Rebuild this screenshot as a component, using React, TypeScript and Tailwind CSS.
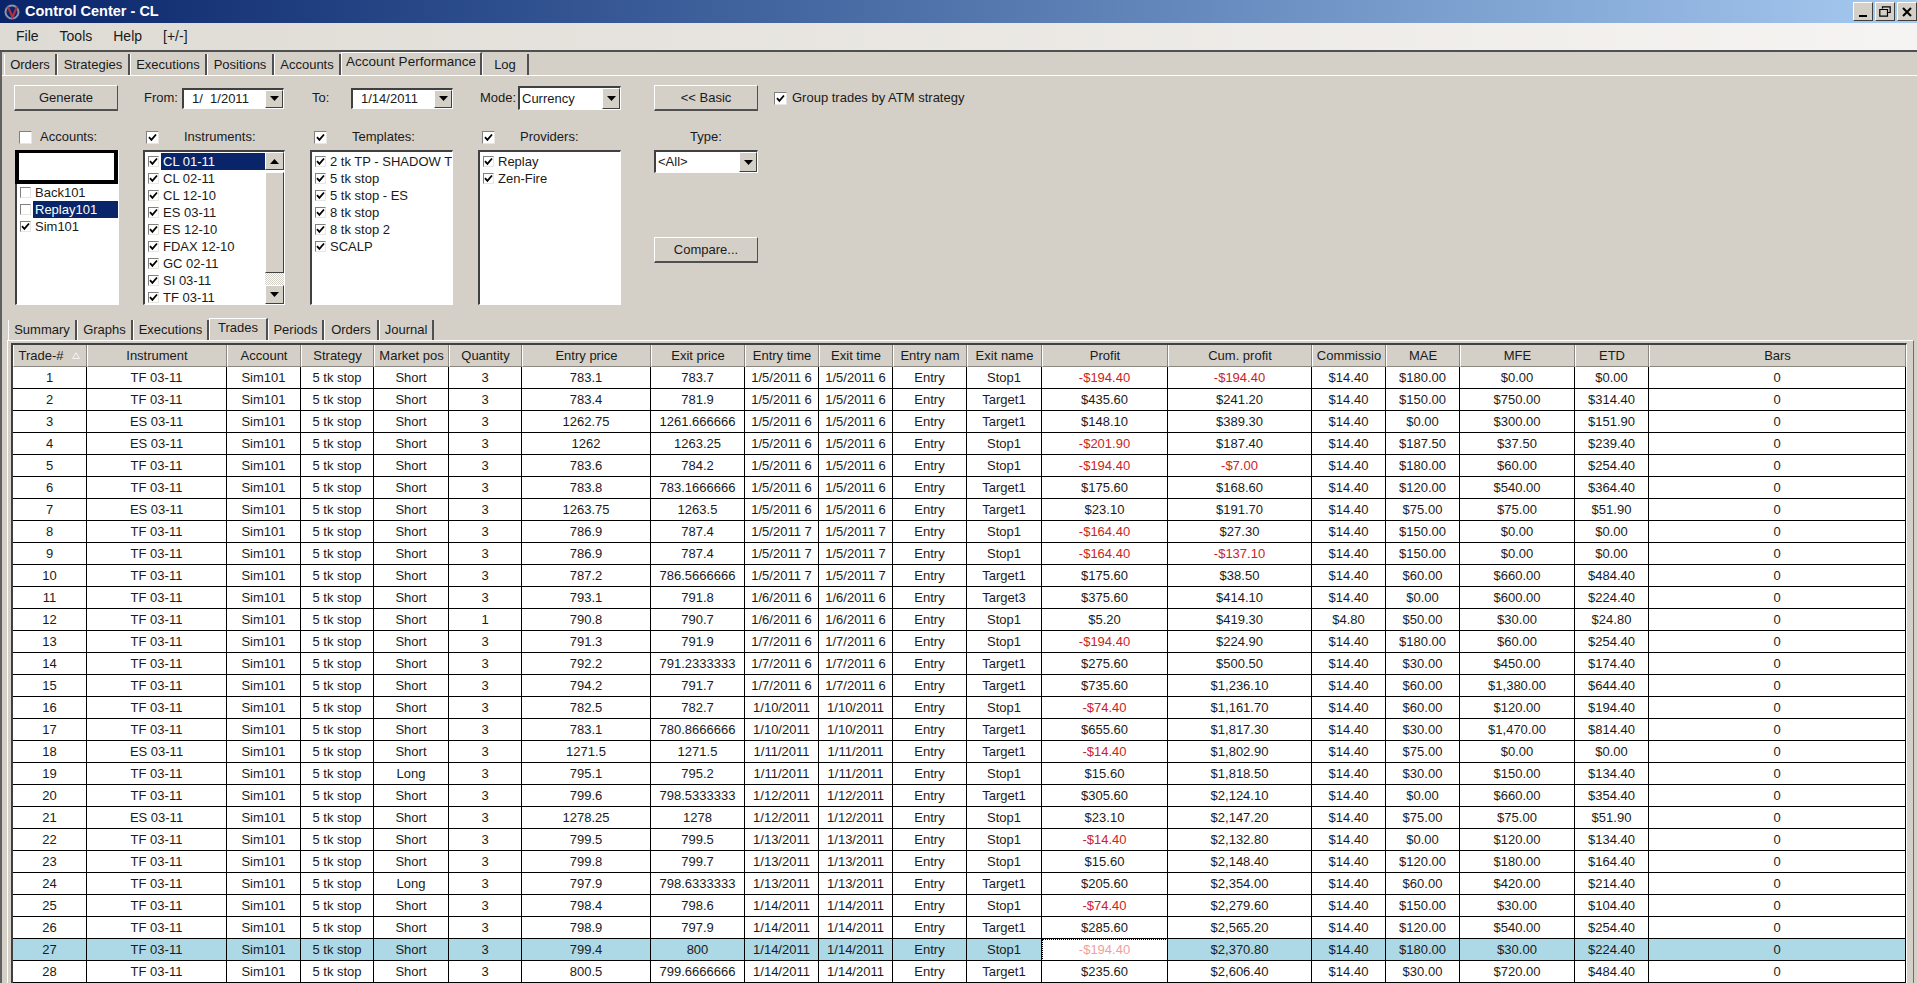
import React from 'react';

type Trade = [number, string, string, string, string, string, string, string, string, string, string, string, string, string, string];

const columns = [
  { label: 'Trade-#', width: 'w-[74px]' },
  { label: 'Instrument', width: 'w-[140px]' },
  { label: 'Account', width: 'w-[74px]' },
  { label: 'Strategy', width: 'w-[73px]' },
  { label: 'Market pos', width: 'w-[75px]' },
  { label: 'Quantity', width: 'w-[73px]' },
  { label: 'Entry price', width: 'w-[129px]' },
  { label: 'Exit price', width: 'w-[94px]' },
  { label: 'Entry time', width: 'w-[74px]' },
  { label: 'Exit time', width: 'w-[74px]' },
  { label: 'Entry nam', width: 'w-[74px]' },
  { label: 'Exit name', width: 'w-[75px]' },
  { label: 'Profit', width: 'w-[126px]' },
  { label: 'Cum. profit', width: 'w-[144px]' },
  { label: 'Commissio', width: 'w-[74px]' },
  { label: 'MAE', width: 'w-[74px]' },
  { label: 'MFE', width: 'w-[115px]' },
  { label: 'ETD', width: 'w-[74px]' },
  { label: 'Bars', width: 'w-[257px]' },
];

// id, instrument, position, qty, entry, exit, time, exit name, profit, cum, commission, mae, mfe, etd
const trades: Trade[] = [
  [1, 'TF 03-11', 'Short', '3', '783.1', '783.7', '1/5/2011 6', 'Stop1', '-$194.40', '-$194.40', '$14.40', '$180.00', '$0.00', '$0.00', ''],
  [2, 'TF 03-11', 'Short', '3', '783.4', '781.9', '1/5/2011 6', 'Target1', '$435.60', '$241.20', '$14.40', '$150.00', '$750.00', '$314.40', ''],
  [3, 'ES 03-11', 'Short', '3', '1262.75', '1261.666666', '1/5/2011 6', 'Target1', '$148.10', '$389.30', '$14.40', '$0.00', '$300.00', '$151.90', ''],
  [4, 'ES 03-11', 'Short', '3', '1262', '1263.25', '1/5/2011 6', 'Stop1', '-$201.90', '$187.40', '$14.40', '$187.50', '$37.50', '$239.40', ''],
  [5, 'TF 03-11', 'Short', '3', '783.6', '784.2', '1/5/2011 6', 'Stop1', '-$194.40', '-$7.00', '$14.40', '$180.00', '$60.00', '$254.40', ''],
  [6, 'TF 03-11', 'Short', '3', '783.8', '783.1666666', '1/5/2011 6', 'Target1', '$175.60', '$168.60', '$14.40', '$120.00', '$540.00', '$364.40', ''],
  [7, 'ES 03-11', 'Short', '3', '1263.75', '1263.5', '1/5/2011 6', 'Target1', '$23.10', '$191.70', '$14.40', '$75.00', '$75.00', '$51.90', ''],
  [8, 'TF 03-11', 'Short', '3', '786.9', '787.4', '1/5/2011 7', 'Stop1', '-$164.40', '$27.30', '$14.40', '$150.00', '$0.00', '$0.00', ''],
  [9, 'TF 03-11', 'Short', '3', '786.9', '787.4', '1/5/2011 7', 'Stop1', '-$164.40', '-$137.10', '$14.40', '$150.00', '$0.00', '$0.00', ''],
  [10, 'TF 03-11', 'Short', '3', '787.2', '786.5666666', '1/5/2011 7', 'Target1', '$175.60', '$38.50', '$14.40', '$60.00', '$660.00', '$484.40', ''],
  [11, 'TF 03-11', 'Short', '3', '793.1', '791.8', '1/6/2011 6', 'Target3', '$375.60', '$414.10', '$14.40', '$0.00', '$600.00', '$224.40', ''],
  [12, 'TF 03-11', 'Short', '1', '790.8', '790.7', '1/6/2011 6', 'Stop1', '$5.20', '$419.30', '$4.80', '$50.00', '$30.00', '$24.80', ''],
  [13, 'TF 03-11', 'Short', '3', '791.3', '791.9', '1/7/2011 6', 'Stop1', '-$194.40', '$224.90', '$14.40', '$180.00', '$60.00', '$254.40', ''],
  [14, 'TF 03-11', 'Short', '3', '792.2', '791.2333333', '1/7/2011 6', 'Target1', '$275.60', '$500.50', '$14.40', '$30.00', '$450.00', '$174.40', ''],
  [15, 'TF 03-11', 'Short', '3', '794.2', '791.7', '1/7/2011 6', 'Target1', '$735.60', '$1,236.10', '$14.40', '$60.00', '$1,380.00', '$644.40', ''],
  [16, 'TF 03-11', 'Short', '3', '782.5', '782.7', '1/10/2011', 'Stop1', '-$74.40', '$1,161.70', '$14.40', '$60.00', '$120.00', '$194.40', ''],
  [17, 'TF 03-11', 'Short', '3', '783.1', '780.8666666', '1/10/2011', 'Target1', '$655.60', '$1,817.30', '$14.40', '$30.00', '$1,470.00', '$814.40', ''],
  [18, 'ES 03-11', 'Short', '3', '1271.5', '1271.5', '1/11/2011', 'Target1', '-$14.40', '$1,802.90', '$14.40', '$75.00', '$0.00', '$0.00', ''],
  [19, 'TF 03-11', 'Long', '3', '795.1', '795.2', '1/11/2011', 'Stop1', '$15.60', '$1,818.50', '$14.40', '$30.00', '$150.00', '$134.40', ''],
  [20, 'TF 03-11', 'Short', '3', '799.6', '798.5333333', '1/12/2011', 'Target1', '$305.60', '$2,124.10', '$14.40', '$0.00', '$660.00', '$354.40', ''],
  [21, 'ES 03-11', 'Short', '3', '1278.25', '1278', '1/12/2011', 'Stop1', '$23.10', '$2,147.20', '$14.40', '$75.00', '$75.00', '$51.90', ''],
  [22, 'TF 03-11', 'Short', '3', '799.5', '799.5', '1/13/2011', 'Stop1', '-$14.40', '$2,132.80', '$14.40', '$0.00', '$120.00', '$134.40', ''],
  [23, 'TF 03-11', 'Short', '3', '799.8', '799.7', '1/13/2011', 'Stop1', '$15.60', '$2,148.40', '$14.40', '$120.00', '$180.00', '$164.40', ''],
  [24, 'TF 03-11', 'Long', '3', '797.9', '798.6333333', '1/13/2011', 'Target1', '$205.60', '$2,354.00', '$14.40', '$60.00', '$420.00', '$214.40', ''],
  [25, 'TF 03-11', 'Short', '3', '798.4', '798.6', '1/14/2011', 'Stop1', '-$74.40', '$2,279.60', '$14.40', '$150.00', '$30.00', '$104.40', ''],
  [26, 'TF 03-11', 'Short', '3', '798.9', '797.9', '1/14/2011', 'Target1', '$285.60', '$2,565.20', '$14.40', '$120.00', '$540.00', '$254.40', ''],
  [27, 'TF 03-11', 'Short', '3', '799.4', '800', '1/14/2011', 'Stop1', '-$194.40', '$2,370.80', '$14.40', '$180.00', '$30.00', '$224.40', ''],
  [28, 'TF 03-11', 'Short', '3', '800.5', '799.6666666', '1/14/2011', 'Target1', '$235.60', '$2,606.40', '$14.40', '$30.00', '$720.00', '$484.40', ''],
];

const raised = 'border border-t-white border-l-white border-r-[#404040] border-b-[#404040] bg-[#d4d0c8]';
const sunken = 'border-t-2 border-l-2 border-b border-r border-t-[#404040] border-l-[#404040] border-b-white border-r-white bg-white';

const Check: React.FC<{ checked?: boolean; size?: string }> = ({ checked, size = 'w-[13px] h-[13px]' }) => (
  <span className={`${size} shrink-0 flex items-center justify-center bg-white border border-t-[#808080] border-l-[#808080] border-b-[#e8e6e0] border-r-[#e8e6e0]`}>
    {checked && (
      <svg viewBox="0 0 9 9" className="w-[9px] h-[9px]">
        <path d="M1 4.2 L3.4 6.8 L8 1.5" fill="none" stroke="#000" strokeWidth="1.8" />
      </svg>
    )}
  </span>
);

const ArrowButton: React.FC<{ up?: boolean; className?: string }> = ({ up, className = '' }) => (
  <span className={`${raised} flex items-center justify-center shrink-0 ${className}`}>
    <svg viewBox="0 0 9 5" className="w-[9px] h-[5px]">
      <path d={up ? 'M0 5 L4.5 0 L9 5 Z' : 'M0 0 L9 0 L4.5 5 Z'} fill="#000" />
    </svg>
  </span>
);

const Button: React.FC<{ label: string }> = ({ label }) => (
  <button className="w-[104px] h-[26px] shrink-0 border border-t-white border-l-white border-r-[#505050] border-b-[#505050] border-b-2 bg-[#d4d0c8] text-[13px] text-[#1a1a1a]">
    {label}
  </button>
);

const Combo: React.FC<{ value: string; width: string; height?: string; pad?: string }> = ({ value, width, height = 'h-[21px]', pad = 'pl-[6px]' }) => (
  <div className={`${width} ${height} ${sunken} shrink-0 flex items-center justify-between text-[13px] ${pad}`}>
    <span className="whitespace-pre">{value}</span>
    <ArrowButton className="w-[18px] h-full" />
  </div>
);

const ListItem: React.FC<{ label: string; checked?: boolean; selected?: boolean }> = ({ label, checked, selected }) => (
  <div className="h-[17px] flex items-center text-[13px] whitespace-nowrap overflow-hidden pl-[2px]">
    <Check checked={checked} size="w-[11px] h-[11px]" />
    <span className={`ml-[2px] pl-[2px] flex-1 h-full flex items-center ${selected ? 'bg-[#0a246a] text-white' : ''}`}>{label}</span>
  </div>
);

const ColumnHead: React.FC<{ label: string; checked?: boolean; cbMargin: string; labelMargin: string }> = ({ label, checked, cbMargin, labelMargin }) => (
  <div className="h-[16px] mb-[5px] flex items-center text-[13px]">
    <span className={cbMargin}>
      <Check checked={checked} />
    </span>
    <span className={labelMargin}>{label}</span>
  </div>
);

const Tab: React.FC<{ label: string; width: string; active?: boolean }> = ({ label, width, active }) => (
  <div
    className={`${width} shrink-0 flex items-center justify-center border-r-2 border-r-[#505050] border-l border-l-white ${
      active ? 'h-[23px] pb-[3px] bg-[#d4d0c8] border-t border-t-white text-[13.5px]' : 'h-[21px] text-[13px]'
    }`}
  >
    {label}
  </div>
);

const SubTab: React.FC<{ label: string; width: string; active?: boolean }> = ({ label, width, active }) => (
  <div
    className={`${width} shrink-0 flex items-center justify-center border-r-2 border-r-[#505050] border-l border-l-white ${
      active ? 'h-[22px] pb-[3px] border-t border-t-white' : 'h-[20px]'
    } text-[13px]`}
  >
    {label}
  </div>
);

export default function App() {
  return (
    <div className="w-[1917px] h-[983px] overflow-hidden flex flex-col bg-[#d4d0c8] text-[#1a1a1a] font-['Liberation_Sans',Arial,sans-serif]">
      {/* title bar */}
      <div className="h-[23px] shrink-0 flex items-center justify-between bg-gradient-to-r from-[#0a246a] to-[#a6caf0]">
        <div className="flex items-center pl-[4px] text-white font-bold text-[14.5px]">
          <svg viewBox="0 0 16 16" className="w-[16px] h-[16px]">
            <circle cx="8" cy="8" r="6.5" fill="none" stroke="#8b93a8" strokeWidth="2" />
            <path d="M4 3 L8.5 13 L13 3" fill="none" stroke="#b03040" strokeWidth="2.2" />
          </svg>
          <span className="ml-[5px]">Control Center - CL</span>
        </div>
        <div className="flex gap-[2px] items-center h-full">
          <span className={`${raised} w-[20px] h-[19px] flex items-end justify-center pb-[3px]`}>
            <span className="w-[8px] h-[2px] bg-black" />
          </span>
          <span className={`${raised} w-[20px] h-[19px] flex items-center justify-center`}>
            <svg viewBox="0 0 12 11" className="w-[12px] h-[11px]">
              <path d="M3.5 2.5 V0.8 H11.2 V6.5 H9 M0.8 3.5 H8.5 V10.2 H0.8 Z" fill="none" stroke="#000" strokeWidth="1.2" />
            </svg>
          </span>
          <span className={`${raised} w-[20px] h-[19px] flex items-center justify-center`}>
            <svg viewBox="0 0 10 10" className="w-[10px] h-[10px]">
              <path d="M1 1 L9 9 M9 1 L1 9" fill="none" stroke="#000" strokeWidth="2" />
            </svg>
          </span>
        </div>
      </div>

      {/* menu */}
      <div className="h-[29px] shrink-0 flex items-center text-[14px] pl-[16px] pb-[1px] gap-[21px] border-b-2 border-b-[#505050] bg-gradient-to-r from-[#dedbd4] to-[#f6f4f2]">
        <span>File</span>
        <span>Tools</span>
        <span>Help</span>
        <span>[+/-]</span>
      </div>

      <div className="flex-1 min-h-0 flex flex-col border-l-2 border-l-[#606060]">
        {/* main tabs */}
        <div className="h-[24px] shrink-0 flex items-end pl-[2px] border-b border-b-white">
          <Tab label="Orders" width="w-[53px]" />
          <Tab label="Strategies" width="w-[73px]" />
          <Tab label="Executions" width="w-[77px]" />
          <Tab label="Positions" width="w-[67px]" />
          <Tab label="Accounts" width="w-[67px]" />
          <Tab label="Account Performance" width="w-[141px]" active />
          <Tab label="Log" width="w-[47px]" />
        </div>

        {/* top controls */}
        <div className="mt-[9px] ml-[12px] h-[26px] shrink-0 flex items-center text-[13px]">
          <Button label="Generate" />
          <span className="ml-[26px] w-[38px]">From:</span>
          <Combo value="1/  1/2011" width="w-[102px]" pad="pl-[8px]" />
          <span className="ml-[28px] w-[39px]">To:</span>
          <Combo value="1/14/2011" width="w-[102px]" pad="pl-[8px]" />
          <span className="ml-[27px] w-[38px]">Mode:</span>
          <Combo value="Currency" width="w-[103px]" height="h-[24px]" pad="pl-[2px]" />
          <span className="ml-[33px]">
            <Button label="<< Basic" />
          </span>
          <span className="ml-[16px]">
            <Check checked />
          </span>
          <span className="ml-[5px]">Group trades by ATM strategy</span>
        </div>

        {/* filter lists */}
        <div className="mt-[18px] shrink-0 flex">
          <div className="ml-[13px] w-[104px]">
            <ColumnHead label="Accounts:" cbMargin="ml-[4px]" labelMargin="ml-[8px]" />
            <div className={`${sunken} h-[155px] border-t-[0px] border-l-[#404040]`}>
              <div className="h-[34px] border-t-[3px] border-x-4 border-b-4 border-black -ml-[2px] bg-white" />
              <div className="pl-[1px]">
                <ListItem label="Back101" />
                <ListItem label="Replay101" selected />
                <ListItem label="Sim101" checked />
              </div>
            </div>
          </div>

          <div className="ml-[24px] w-[142px]">
            <ColumnHead label="Instruments:" checked cbMargin="ml-[3px]" labelMargin="ml-[25px]" />
            <div className={`${sunken} h-[155px] flex`}>
              <div className="flex-1 min-w-0 pt-[1px] pl-[1px]">
                <ListItem label="CL 01-11" checked selected />
                <ListItem label="CL 02-11" checked />
                <ListItem label="CL 12-10" checked />
                <ListItem label="ES 03-11" checked />
                <ListItem label="ES 12-10" checked />
                <ListItem label="FDAX 12-10" checked />
                <ListItem label="GC 02-11" checked />
                <ListItem label="SI 03-11" checked />
                <ListItem label="TF 03-11" checked />
              </div>
              <div className="w-[19px] flex flex-col">
                <ArrowButton up className="h-[18px]" />
                <div className={`${raised} h-[101px] mt-[2px]`} />
                <div className="flex-1 bg-[repeating-conic-gradient(#ffffff_0_25%,#d4d0c8_0_50%)] bg-[length:2px_2px]" />
                <ArrowButton className="h-[19px]" />
              </div>
            </div>
          </div>

          <div className="ml-[25px] w-[143px]">
            <ColumnHead label="Templates:" checked cbMargin="ml-[4px]" labelMargin="ml-[25px]" />
            <div className={`${sunken} h-[155px] pt-[1px] pl-[1px] overflow-hidden`}>
              <ListItem label="2 tk TP - SHADOW TRADE" checked />
              <ListItem label="5 tk stop" checked />
              <ListItem label="5 tk stop - ES" checked />
              <ListItem label="8 tk stop" checked />
              <ListItem label="8 tk stop 2" checked />
              <ListItem label="SCALP" checked />
            </div>
          </div>

          <div className="ml-[25px] w-[143px]">
            <ColumnHead label="Providers:" checked cbMargin="ml-[4px]" labelMargin="ml-[25px]" />
            <div className={`${sunken} h-[155px] pt-[1px] pl-[1px]`}>
              <ListItem label="Replay" checked />
              <ListItem label="Zen-Fire" checked />
            </div>
          </div>

          <div className="ml-[33px] w-[104px] flex flex-col">
            <div className="h-[16px] mb-[5px] text-center text-[13px] leading-[16px]">Type:</div>
            <Combo value="<All>" width="w-[104px]" height="h-[23px]" pad="pl-[2px]" />
            <div className="mt-[64px]">
              <Button label="Compare..." />
            </div>
          </div>
        </div>

        {/* result tabs */}
        <div className="mt-[13px] h-[22px] shrink-0 flex items-end ml-[6px]">
          <SubTab label="Summary" width="w-[69px]" />
          <SubTab label="Graphs" width="w-[56px]" />
          <SubTab label="Executions" width="w-[76px]" />
          <SubTab label="Trades" width="w-[59px]" active />
          <SubTab label="Periods" width="w-[56px]" />
          <SubTab label="Orders" width="w-[55px]" />
          <SubTab label="Journal" width="w-[55px]" />
        </div>

        {/* trades grid */}
        <div className="flex-1 min-h-0 ml-[5px] mr-[3px] pt-[2px] pl-[3px] border-t border-l border-t-white border-l-white border-r border-r-[#707070]">
          <div className="w-[1896px] border-t-2 border-l-2 border-t-[#404040] border-l-[#404040] border-r border-r-white">
            <table className="table-fixed border-separate border-spacing-0 w-[1893px] text-[13px]">
              <colgroup>
                {columns.map((c) => (
                  <col key={c.label} className={c.width} />
                ))}
              </colgroup>
              <thead>
                <tr>
                  {columns.map((c, i) => (
                    <th
                      key={c.label}
                      className="h-[22px] p-0 font-normal bg-[#d4d0c8] border-l border-l-white border-r border-r-[#8a8780] border-b border-b-[#8a8780] overflow-hidden whitespace-nowrap"
                    >
                      {i === 0 ? (
                        <span className="flex items-center justify-center gap-[8px] pr-[2px]">
                          {c.label}
                          <svg viewBox="0 0 8 7" className="w-[8px] h-[7px]">
                            <path d="M4 0.8 L7.4 6.4 H0.6 Z" fill="none" stroke="#f5f5f5" strokeWidth="1" />
                          </svg>
                        </span>
                      ) : (
                        c.label
                      )}
                    </th>
                  ))}
                </tr>
              </thead>
              <tbody>
                {trades.map((t) => {
                  const [id, inst, pos, qty, entry, exit, time, exitName, profit, cum, comm, mae, mfe, etd] = t;
                  const selected = id === 27;
                  const cells = [String(id), inst, 'Sim101', '5 tk stop', pos, qty, entry, exit, time, time, 'Entry', exitName, profit, cum, comm, mae, mfe, etd, '0'];
                  return (
                    <tr key={id} className={selected ? 'bg-[#add8e6]' : 'bg-white'}>
                      {cells.map((v, i) => {
                        const red = v.startsWith('-');
                        const focused = selected && i === 12;
                        return (
                          <td
                            key={i}
                            className={`h-[22px] p-0 text-center whitespace-nowrap overflow-hidden border-r border-b border-black ${
                              focused
                                ? 'bg-white text-[#f0a0a0] outline-1 outline-dotted outline-black -outline-offset-1'
                                : red
                                  ? 'text-[#cc2222]'
                                  : ''
                            }`}
                          >
                            {v}
                          </td>
                        );
                      })}
                    </tr>
                  );
                })}
              </tbody>
            </table>
          </div>
        </div>
      </div>
    </div>
  );
}
